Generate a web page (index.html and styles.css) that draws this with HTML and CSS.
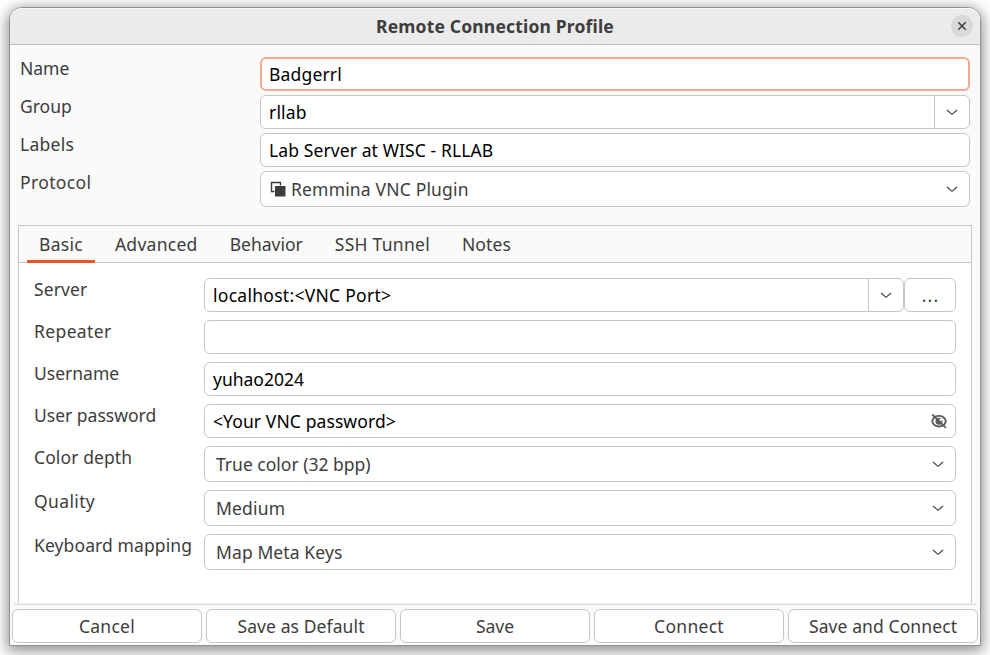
FILE: index.html
```html
<!DOCTYPE html>
<html lang="en">
<head>
<meta charset="utf-8">
<title>Remote Connection Profile</title>
<link rel="stylesheet" href="styles.css">
</head>
<body>
<svg class="defs" aria-hidden="true">
  <symbol id="chevron" viewBox="0 0 16 16"><path d="M3 6l5 4.300L13 6" fill="none" stroke="currentColor" stroke-width="1.100"/></symbol>
</svg>
<main class="window">
  <header class="titlebar">
    <h1>Remote Connection Profile</h1>
    <button class="close" aria-label="Close"><svg viewBox="0 0 10 10"><path d="m1.300 1.300 7.400 7.400M8.700 1.300 1.300 8.700" fill="none" stroke="currentColor" stroke-width="1.500"/></svg></button>
  </header>
  <section class="profile">
    <label>Name</label><div class="field focused"><span class="ls-2">Badgerrl</span></div>
    <label>Group</label><div class="field combo"><span class="ls-2">rllab</span><i class="drop"><svg><use href="#chevron"/></svg></i></div>
    <label class="ls-3">Labels</label><div class="field"><span class="ls-1">Lab Server at WISC - RLLAB</span></div>
    <label class="ls-4">Protocol</label><div class="field select protocol"><svg class="vnc" viewBox="0 0 16 16"><path d="M4.500 10.500h-3v-9h9v3" fill="none" stroke="currentColor" stroke-width="1.400"/><path d="M5 5h10.500v10.500H5z" fill="currentColor"/></svg><span class="ls-2">Remmina VNC Plugin</span><svg class="chev"><use href="#chevron"/></svg></div>
  </section>
  <section class="notebook">
    <nav class="tabs">
      <a class="active ls-3">Basic</a><a class="ls-3">Advanced</a><a>Behavior</a><a class="ls-3">SSH Tunnel</a><a class="ls-1">Notes</a>
    </nav>
    <div class="page">
      <label class="ls-1">Server</label><div class="server"><div class="field combo"><span class="ls-3">localhost:&lt;VNC Port&gt;</span><i class="drop"><svg><use href="#chevron"/></svg></i></div><button class="field more">...</button></div>
      <label class="ls-4">Repeater</label><div class="field"></div>
      <label>Username</label><div class="field"><span>yuhao2024</span></div>
      <label>User password</label><div class="field"><span class="ls-1">&lt;Your VNC password&gt;</span><svg class="eye" viewBox="0 0 16 16"><path d="M1.100 8.200c.9-3 3.500-5.300 6.900-5.300s6 2.300 6.900 5.300c-.9 3-3.500 5.300-6.900 5.300s-6-2.300-6.900-5.300z" fill="none" stroke="currentColor" stroke-width="1.900"/><circle cx="8" cy="8.200" r="3.500" fill="currentColor"/><circle cx="9.800" cy="6.800" r="1.400" fill="#fff"/><path d="m1.200 1.500 13.700 13.300" stroke="currentColor" stroke-width="1.800"/></svg></div>
      <label class="ls-1">Color depth</label><div class="field select"><span>True color (32 bpp)</span><svg class="chev"><use href="#chevron"/></svg></div>
      <label class="ls-4">Quality</label><div class="field select"><span class="ls-2">Medium</span><svg class="chev"><use href="#chevron"/></svg></div>
      <label class="ls-1">Keyboard mapping</label><div class="field select"><span class="ls-1">Map Meta Keys</span><svg class="chev"><use href="#chevron"/></svg></div>
    </div>
  </section>
  <footer class="actions">
    <button class="ls-3">Cancel</button><button class="ls-1">Save as Default</button><button>Save</button><button class="ls-3">Connect</button><button class="ls-1">Save and Connect</button>
  </footer>
</main>
</body>
</html>
```
FILE: styles.css
```css
* { box-sizing: border-box; }
body {
  margin: 0;
  height: 655px;
  padding: 7px 9px 9px;
  overflow: hidden;
  background: #fff;
  color: #3d3d3d;
  font: 17.5px/22px "Noto Sans", sans-serif;
}
.defs { position: absolute; width: 0; height: 0; }
.window {
  width: 972px;
  height: 639px;
  display: flex;
  flex-direction: column;
  background: #fafafa;
  border: 1px solid #929292;
  border-radius: 13px 13px 0 0;
  box-shadow: 0 3px 14px 2px rgba(0, 0, 0, .44);
}
.titlebar {
  height: 37px;
  display: grid;
  grid-template-columns: 1fr auto 1fr;
  align-items: center;
  padding-right: 7px;
  background: #ebebeb;
  border-bottom: 1px solid #bdbdbd;
  border-radius: 12px 12px 0 0;
  box-shadow: inset 0 1px #fafafa;
}
h1 {
  grid-column: 2;
  margin: 0 -7px 0 0;
  font-size: 17.5px;
  line-height: 22px;
  font-weight: 700;
  letter-spacing: .17px;
  white-space: nowrap;
}
button { font: inherit; color: inherit; padding: 0; }
.close {
  justify-self: end;
  width: 22px;
  height: 22px;
  display: grid;
  place-items: center;
  border: 0;
  border-radius: 50%;
  background: #d9d9d9;
}
.close svg { width: 10px; height: 10px; }
.profile {
  display: grid;
  grid-template-columns: 240px 710px;
  row-gap: 4px;
  padding: 12px 10px 0;
}
label, .field span, .tabs a, .actions button { white-space: nowrap; }
label { justify-self: start; height: 22px; }
.ls-1 { letter-spacing: .1px; }
.ls-2 { letter-spacing: .17px; }
.ls-3 { letter-spacing: .28px; }
.ls-4 { letter-spacing: .37px; }
.field {
  height: 34px;
  display: flex;
  align-items: center;
  justify-content: space-between;
  padding: 0 8px;
  background: #fff;
  border: 1px solid #c6c6c6;
  border-radius: 6px;
  color: #000;
}
.field.focused { border: 2px solid #f4aa90; padding: 0 7px; }
.field.combo { padding-right: 0; }
.drop {
  width: 35px;
  height: 32px;
  display: grid;
  place-items: center;
  border-left: 1px solid #c6c6c6;
  color: #3d3d3d;
}
.drop svg, .chev, .vnc, .eye { width: 16px; height: 16px; }
.field.select { height: 36px; padding: 0 9px 0 11px; color: #3d3d3d; }
.field.protocol { padding-left: 9px; }
.protocol span { margin: 0 auto 0 5px; }
.eye { color: #5c5c5c; }
.notebook {
  height: 378px;
  width: 954px;
  margin: 18px 0 0 8px;
  background: #fff;
  border: solid #c6c6c6;
  border-width: 1px 1px 0;
}
.tabs {
  height: 37px;
  display: flex;
  padding-left: 8px;
  background: #fafafa;
  border-bottom: 1px solid #c6c6c6;
}
.tabs a { height: 37px; padding: 7px 12px 0; margin-right: 8px; }
.tabs .active { border-bottom: 3px solid #e95420; }
.page {
  display: grid;
  grid-template-columns: 170px 752px;
  row-gap: 8px;
  padding: 15px;
}
.server { display: grid; grid-template-columns: 700px 52px; }
.field.more { justify-content: center; color: #3d3d3d; letter-spacing: 1.2px; padding-left: 9px; }
.actions {
  height: 41px;
  margin: 0 2px;
  padding-top: 6px;
  display: grid;
  grid-template-columns: repeat(5, 190px);
  gap: 4px;
  background: linear-gradient(#efefef 50%, #dedede 50%) center top / 962px 2px no-repeat;
}
.actions button { height: 34px; background: #fff; border: 1px solid #c6c6c6; border-radius: 6px; }
```
